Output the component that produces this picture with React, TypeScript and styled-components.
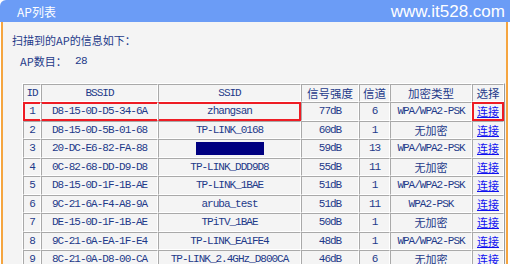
import styled, { createGlobalStyle, css } from 'styled-components';

const GlobalStyle = createGlobalStyle`
  html, body {
    margin: 0;
    padding: 0;
    background: #ffffff;
  }
`;

const CJK = `"Noto Sans CJK SC", "Liberation Sans", sans-serif`;
const MONO = `"Liberation Mono", "Noto Sans CJK SC", monospace`;
const NAVY = '#1e3a8a';
const ORANGE = '#f5a540';

interface ApRow {
  id: number;
  bssid: string;
  ssid: string | null;
  signal: string;
  channel: number;
  security: string;
}

const rows: ApRow[] = [
  { id: 1, bssid: 'D8-15-0D-D5-34-6A', ssid: 'zhangsan', signal: '77dB', channel: 6, security: 'WPA/WPA2-PSK' },
  { id: 2, bssid: 'D8-15-0D-5B-01-68', ssid: 'TP-LINK_0168', signal: '60dB', channel: 1, security: '无加密' },
  { id: 3, bssid: '20-DC-E6-82-FA-88', ssid: null, signal: '59dB', channel: 13, security: 'WPA/WPA2-PSK' },
  { id: 4, bssid: '0C-82-68-DD-D9-D8', ssid: 'TP-LINK_DDD9D8', signal: '55dB', channel: 11, security: '无加密' },
  { id: 5, bssid: 'D8-15-0D-1F-1B-AE', ssid: 'TP-LINK_1BAE', signal: '51dB', channel: 1, security: 'WPA/WPA2-PSK' },
  { id: 6, bssid: '9C-21-6A-F4-A8-9A', ssid: 'aruba_test', signal: '51dB', channel: 11, security: 'WPA2-PSK' },
  { id: 7, bssid: 'DE-15-0D-1F-1B-AE', ssid: 'TPiTV_1BAE', signal: '50dB', channel: 1, security: '无加密' },
  { id: 8, bssid: '9C-21-6A-EA-1F-E4', ssid: 'TP-LINK_EA1FE4', signal: '48dB', channel: 1, security: 'WPA/WPA2-PSK' },
  { id: 9, bssid: '8C-21-0A-D8-00-CA', ssid: 'TP-LINK_2.4GHz_D800CA', signal: '46dB', channel: 6, security: '无加密' },
];

const Panel = styled.div`
  width: 510px;
  height: 264px;
  overflow: hidden;
  display: flex;
  flex-direction: column;
`;

const TitleBar = styled.div`
  height: 22px;
  flex: none;
  background: #6b9cf6;
  border-top-left-radius: 6px;
  display: flex;
  align-items: center;
  justify-content: space-between;
  padding: 0 5px 0 17px;
  color: #ffffff;
`;

const Title = styled.span`
  font-family: ${CJK};
  font-size: 12px;
`;

const Watermark = styled.span`
  font-family: "Liberation Sans", Arial, sans-serif;
  font-size: 17px;
  margin-top: 1px;
`;

const Body = styled.div`
  flex: 1;
  margin: 0 2px 0 1px;
  border-left: 2px solid ${ORANGE};
  border-right: 2px solid ${ORANGE};
  background: #f4f4f4;
  padding: 10px 0 0 9px;
  color: ${NAVY};
`;

const Heading = styled.div`
  font-family: ${CJK};
  font-size: 11px;
  line-height: 16px;
`;

const CountLine = styled.div`
  font-family: ${CJK};
  font-size: 11px;
  line-height: 16px;
  margin: 5px 0 0 8px;
  display: flex;
`;

const CountLabel = styled.span`
  width: 55px;
`;

const CountValue = styled.span`
  font-family: ${MONO};
  letter-spacing: -0.5px;
`;

const Table = styled.table`
  margin: 14px 0 0 10px;
  border-collapse: separate;
  border-spacing: 0;
  table-layout: fixed;
  width: 467px;
  border: 1px solid;
  border-color: #ffffff #9a9a9a #9a9a9a #ffffff;
`;

type Edge = 'left' | 'mid' | 'right' | 'all';

const redBox = (edge: Edge) => {
  const shadows = ['inset 0 1px 0 #ee1c24', 'inset 0 -1px 0 #ee1c24'];
  if (edge === 'left' || edge === 'all') shadows.push('inset 1px 0 0 #ee1c24');
  if (edge === 'right' || edge === 'all') shadows.push('inset -1px 0 0 #ee1c24');
  return css`
    border-top-color: #ee1c24;
    border-bottom-color: #ee1c24;
    ${edge === 'left' || edge === 'all' ? 'border-left-color: #ee1c24;' : ''}
    ${edge === 'right' || edge === 'all' ? 'border-right-color: #ee1c24;' : ''}
    box-shadow: ${shadows.join(', ')};
  `;
};

const Th = styled.th<{ $w: number }>`
  width: ${(p) => p.$w}px;
  padding: 0;
  line-height: 16px;
  font-weight: normal;
  font-family: ${CJK};
  font-size: 11.5px;
  color: ${NAVY};
  border: 1px solid;
  border-color: #a9a9a9 #ffffff #ffffff #a9a9a9;
  text-align: center;
  white-space: nowrap;
`;

const MonoTh = styled(Th)`
  font-family: ${MONO};
  font-size: 11px;
  letter-spacing: -1px;
`;

const Td = styled.td<{ $cjk?: boolean; $box?: Edge }>`
  padding: 0;
  line-height: 16.5px;
  font-family: ${(p) => (p.$cjk ? CJK : MONO)};
  font-size: 11px;
  letter-spacing: ${(p) => (p.$cjk ? '0' : '-1px')};
  color: ${NAVY};
  border: 1px solid;
  border-color: #a9a9a9 #ffffff #ffffff #a9a9a9;
  text-align: center;
  white-space: nowrap;
  overflow: hidden;
  ${(p) => p.$box && redBox(p.$box)}
`;

const Redacted = styled.span`
  display: inline-block;
  vertical-align: middle;
  width: 68px;
  height: 13px;
  background: #000080;
`;

const ConnectLink = styled.a`
  font-family: ${CJK};
  font-size: 11px;
  color: #1010f0;
  text-decoration: underline;
  cursor: pointer;
`;

export default function App() {
  return (
    <>
      <GlobalStyle />
      <Panel>
        <TitleBar>
          <Title>AP列表</Title>
          <Watermark>www.it528.com</Watermark>
        </TitleBar>
        <Body>
          <Heading>扫描到的AP的信息如下：</Heading>
          <CountLine>
            <CountLabel>AP数目：</CountLabel>
            <CountValue>28</CountValue>
          </CountLine>
          <Table>
            <thead>
              <tr>
                <MonoTh $w={16}>ID</MonoTh>
                <MonoTh $w={115}>BSSID</MonoTh>
                <MonoTh $w={141}>SSID</MonoTh>
                <Th $w={56}>信号强度</Th>
                <Th $w={29}>信道</Th>
                <Th $w={80}>加密类型</Th>
                <Th $w={30}>选择</Th>
              </tr>
            </thead>
            <tbody>
              {rows.map((r) => {
                const hl = r.id === 1;
                return (
                  <tr key={r.id}>
                    <Td $box={hl ? 'left' : undefined}>{r.id}</Td>
                    <Td $box={hl ? 'mid' : undefined}>{r.bssid}</Td>
                    <Td $box={hl ? 'right' : undefined}>
                      {r.ssid ?? <Redacted />}
                    </Td>
                    <Td>{r.signal}</Td>
                    <Td>{r.channel}</Td>
                    <Td $cjk={r.security === '无加密'}>{r.security}</Td>
                    <Td $cjk $box={hl ? 'all' : undefined}>
                      <ConnectLink>连接</ConnectLink>
                    </Td>
                  </tr>
                );
              })}
            </tbody>
          </Table>
        </Body>
      </Panel>
    </>
  );
}
